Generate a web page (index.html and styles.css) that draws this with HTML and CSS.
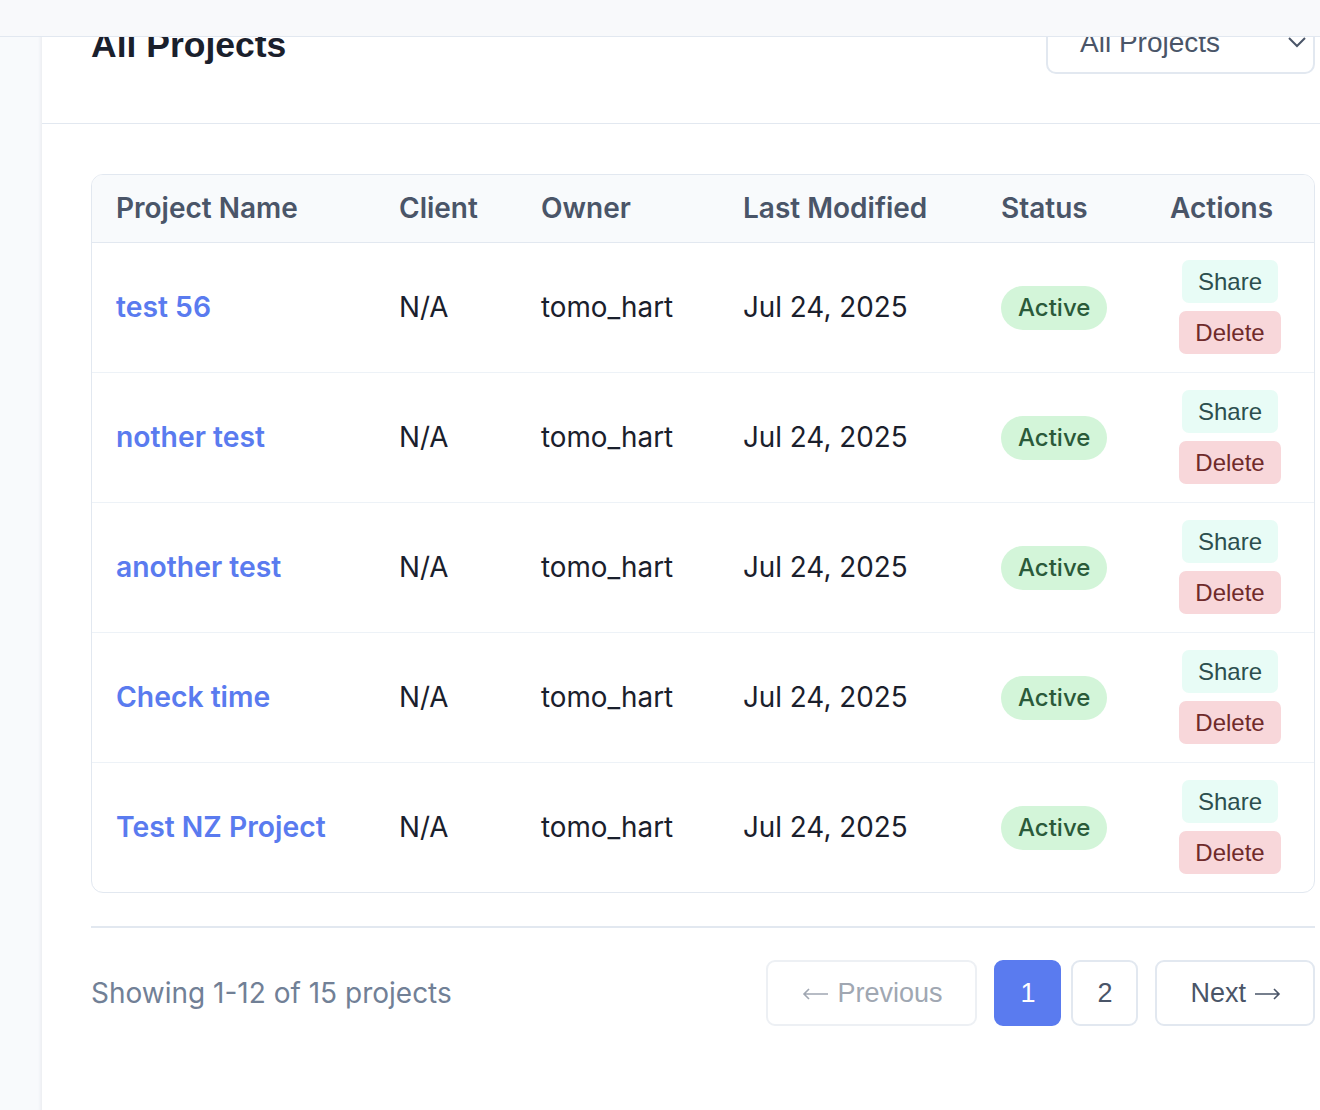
FILE: index.html
```html
<!DOCTYPE html>
<html lang="en">
<head>
<meta charset="utf-8">
<title>All Projects</title>
<link rel="stylesheet" href="styles.css">
</head>
<body>
<div class="topbar"></div>
<div class="app">
  <aside class="sidebar"></aside>
  <main class="main">
    <div class="page-header">
      <h1 class="title">All Projects</h1>
      <div class="select">
        <span>All Projects</span>
        <svg class="chev" width="20" height="12" viewBox="0 0 20 12"><polyline points="2,2 10,10 18,2" fill="none" stroke="#4a5568" stroke-width="2"/></svg>
      </div>
    </div>
    <div class="content">
      <div class="card">
        <table class="grid">
          <colgroup>
            <col class="c1"><col class="c2"><col class="c3"><col class="c4"><col class="c5"><col class="c6">
          </colgroup>
          <thead>
            <tr><th>Project Name</th><th>Client</th><th>Owner</th><th>Last Modified</th><th>Status</th><th>Actions</th></tr>
          </thead>
          <tbody>
            <tr><td><a class="name">test 56</a></td><td>N/A</td><td>tomo_hart</td><td>Jul 24, 2025</td><td><span class="badge">Active</span></td><td><div class="acts"><button class="btn share">Share</button><button class="btn del">Delete</button></div></td></tr>
            <tr><td><a class="name">nother test</a></td><td>N/A</td><td>tomo_hart</td><td>Jul 24, 2025</td><td><span class="badge">Active</span></td><td><div class="acts"><button class="btn share">Share</button><button class="btn del">Delete</button></div></td></tr>
            <tr><td><a class="name">another test</a></td><td>N/A</td><td>tomo_hart</td><td>Jul 24, 2025</td><td><span class="badge">Active</span></td><td><div class="acts"><button class="btn share">Share</button><button class="btn del">Delete</button></div></td></tr>
            <tr><td><a class="name">Check time</a></td><td>N/A</td><td>tomo_hart</td><td>Jul 24, 2025</td><td><span class="badge">Active</span></td><td><div class="acts"><button class="btn share">Share</button><button class="btn del">Delete</button></div></td></tr>
            <tr><td><a class="name">Test NZ Project</a></td><td>N/A</td><td>tomo_hart</td><td>Jul 24, 2025</td><td><span class="badge">Active</span></td><td><div class="acts"><button class="btn share">Share</button><button class="btn del">Delete</button></div></td></tr>
          </tbody>
        </table>
      </div>
      <div class="pager">
        <div class="showing">Showing 1-12 of 15 projects</div>
        <div class="pages">
          <button class="pbtn nav prev disabled"><svg class="arrow" width="27" height="12" viewBox="0 0 27 12"><path d="M26 6H2M7 1L2 6l5 5" fill="none" stroke="currentColor" stroke-width="1.6"/></svg>Previous</button>
          <div class="nums">
            <button class="pbtn num current">1</button>
            <button class="pbtn num">2</button>
          </div>
          <button class="pbtn nav next">Next<svg class="arrow after" width="27" height="12" viewBox="0 0 27 12"><path d="M1 6h24M20 1l5 5-5 5" fill="none" stroke="currentColor" stroke-width="1.6"/></svg></button>
        </div>
      </div>
    </div>
  </main>
</div>
</body>
</html>
```
FILE: styles.css
```css
* { box-sizing: border-box; }
html, body { margin: 0; padding: 0; }
body {
  width: 1320px;
  height: 1110px;
  overflow: hidden;
  background: #ffffff;
  font-family: Inter, "Liberation Sans", sans-serif;
  color: #1a202c;
}
.topbar {
  position: fixed;
  top: 0; left: 0; right: 0;
  height: 37px;
  background: #f8f9fb;
  border-bottom: 1px solid #e2e8f0;
  z-index: 10;
}
.app {
  display: flex;
  height: 1110px;
}
.sidebar {
  width: 42px;
  flex: none;
  background: #f8fafc;
  border-right: 1px solid #eef0f3;
  box-shadow: inset -3px 0 3px -2px #eceff3;
}
.main {
  flex: 1;
  background: #ffffff;
}
.page-header {
  display: flex;
  justify-content: space-between;
  align-items: center;
  padding: 12px 5px 49px 49px;
  border-bottom: 1px solid #e2e8f0;
}
.title {
  margin: 4px 0 0;
  font-family: "Liberation Sans", Arial, sans-serif;
  font-weight: 700;
  font-size: 35.5px;
  line-height: 42px;
  color: #1a202c;
}
.select {
  width: 269px;
  height: 62px;
  border: 2px solid #e2e8f0;
  border-radius: 10px;
  display: flex;
  align-items: center;
  justify-content: space-between;
  padding: 0 6px 0 32px;
  font-family: "Liberation Sans", Arial, sans-serif;
  font-size: 28px;
  color: #4a5568;
}
.chev { margin-top: -2px; }
.content {
  padding: 50px 5px 0 49px;
}
.card {
  border: 1px solid #e2e8f0;
  border-radius: 12px;
  overflow: hidden;
}
.grid {
  width: 100%;
  border-collapse: separate;
  border-spacing: 0;
  table-layout: fixed;
}
.c1 { width: 283px; }
.c2 { width: 142px; }
.c3 { width: 202px; }
.c4 { width: 258px; }
.c5 { width: 169px; }
.c6 { width: 168px; }
.grid th {
  background: #f8fafc;
  text-align: left;
  font-weight: 600;
  font-size: 28px;
  line-height: 31px;
  color: #4a5568;
  padding: 18px 24px;
  border-bottom: 1px solid #e2e8f0;
}
.grid td {
  height: 130px;
  padding: 0 24px;
  font-size: 27.8px;
  line-height: 31px;
  color: #1a202c;
  border-bottom: 1px solid #edf2f7;
  vertical-align: middle;
}
.grid tbody tr:last-child td { border-bottom: none; height: 129px; }
.name {
  color: #5a7bef;
  font-weight: 600;
  font-size: 28.3px;
  text-decoration: none;
}
.badge {
  display: inline-block;
  background: #d3f5d9;
  color: #2a5a3a;
  font-size: 24px;
  font-weight: 500;
  line-height: 30px;
  padding: 7px 17px;
  border-radius: 22px;
}
.acts {
  display: flex;
  flex-direction: column;
  align-items: center;
  gap: 8px;
}
.btn {
  border: none;
  font-family: "Liberation Sans", Arial, sans-serif;
  font-size: 24px;
  line-height: 27px;
  padding: 8px 16px;
  border-radius: 7px;
}
.share { background: #e8fcf6; color: #2c4f4e; margin-top: -2px; }
.del { background: #f8d7da; color: #6f2a2a; }
.pager {
  margin-top: 33px;
  border-top: 2px solid #e2e8f0;
  padding-top: 32px;
  display: flex;
  justify-content: space-between;
  align-items: center;
}
.showing {
  font-size: 28px;
  color: #718096;
}
.pages {
  display: flex;
  align-items: center;
  gap: 17px;
}
.nums {
  display: flex;
  gap: 10px;
}
.pbtn {
  height: 66px;
  background: #ffffff;
  border: 2px solid #e2e8f0;
  border-radius: 9px;
  font-family: "Liberation Sans", Arial, sans-serif;
  font-size: 27px;
  color: #4a5568;
  display: flex;
  align-items: center;
  justify-content: center;
}
.nav { padding: 0 32px; }
.prev { padding: 0 33px 0 34px; }
.next { padding: 0 32px 0 33px; }
.arrow { margin-right: 8px; margin-top: 2px; }
.arrow.after { margin-right: 0; margin-left: 8px; }
.num { width: 67px; padding: 0; }
.disabled { color: #a0a7b2; border-color: #edf0f4; }
.current { background: #5a7bef; border-color: #5a7bef; color: #ffffff; }
```
